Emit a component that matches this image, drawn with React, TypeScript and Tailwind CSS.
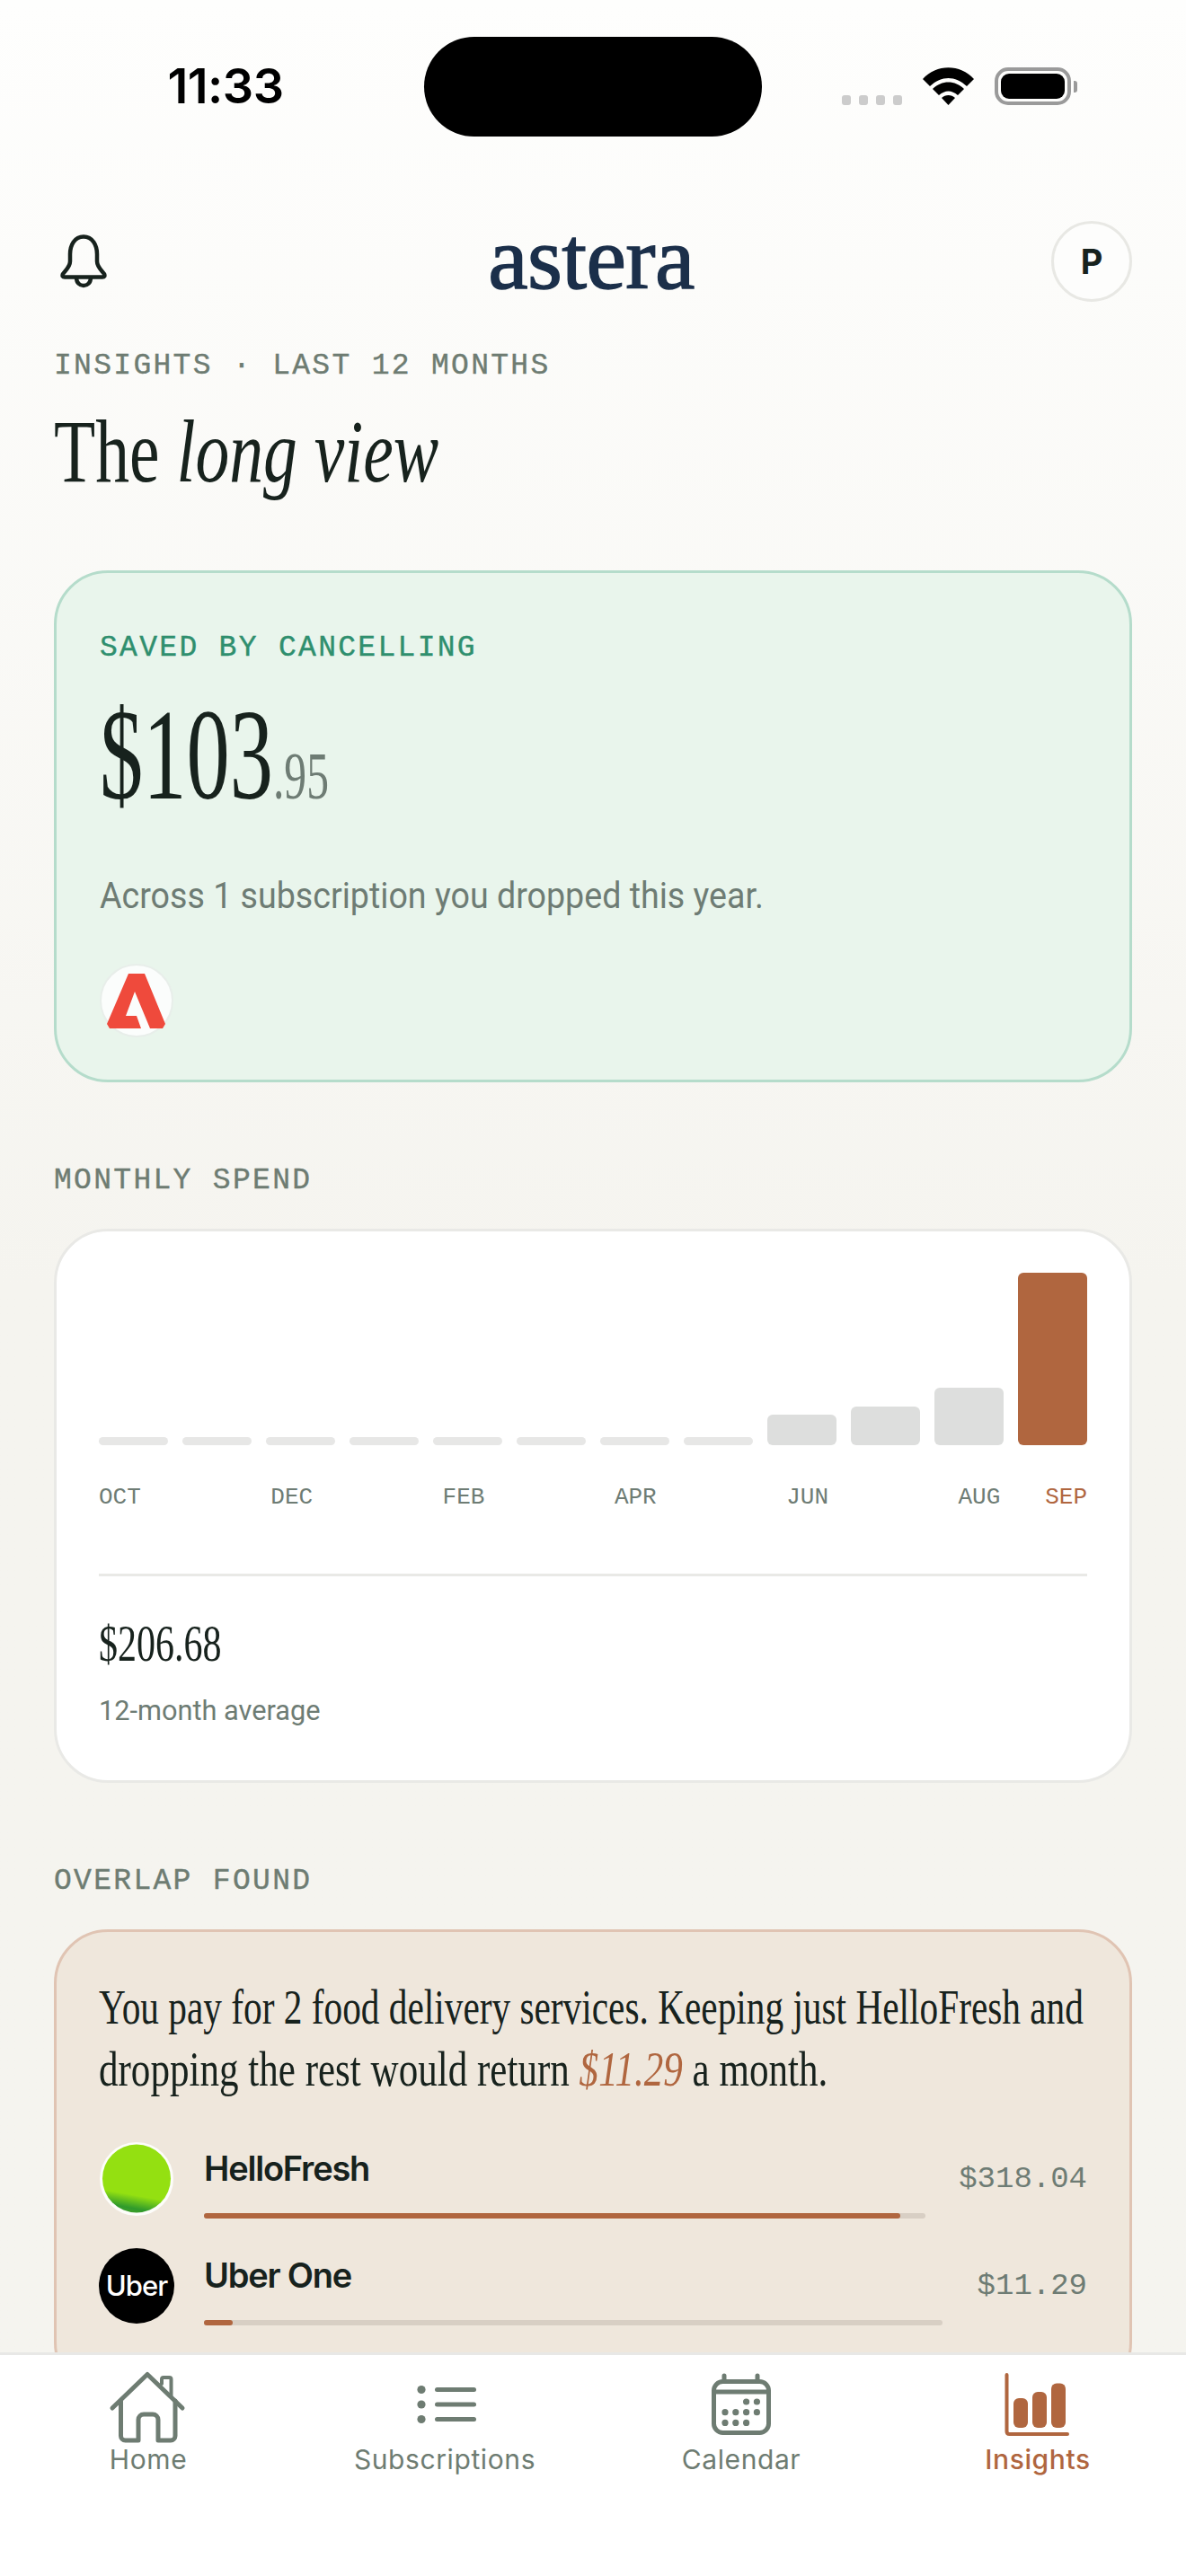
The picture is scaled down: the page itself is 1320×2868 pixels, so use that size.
const bars = [9, 9, 9, 9, 9, 9, 9, 9, 34, 43, 64, 192]
const monthLabels = ['OCT', 'DEC', 'FEB', 'APR', 'JUN']

const serif = "font-['Liberation_Serif',serif]"
const mono = "font-['Liberation_Mono',monospace]"

function StatusBar() {
  return (
    <div className="grid grid-cols-[472px_376px_1fr] pt-[41px] mb-[94px] shrink-0">
      <div className="flex items-center justify-center pl-[30px] pb-[1px]">
        <span className="font-['Inter',sans-serif] font-semibold text-[54px] leading-none tracking-[-0.5px] text-black">11:33</span>
      </div>
      <div className="h-[111px] rounded-[56px] bg-black" />
      <div className="flex items-start pl-[89px] pt-[34px]">
        <div className="flex gap-[9px] mt-[31px]">
          {[0, 1, 2, 3].map((i) => (
            <span key={i} className="w-[10px] h-[11px] rounded-[3px] bg-[#cccccc]" />
          ))}
        </div>
        <svg className="ml-[23px]" width="57" height="42" viewBox="0 0 57 42" fill="#000">
          <path d="M0 13C15-4 42-4 57 13L49 21C36 9 21 9 8 21Z" />
          <path d="M11 24C21 14 36 14 46 24L39 31C32 25 25 25 18 31Z" />
          <path d="M21 34C25 30 32 30 36 34L28.5 42Z" />
        </svg>
        <div className="ml-[23px] w-[85px] h-[42px] rounded-[15px] border-[4px] border-[#9a9a9a] p-[3px]">
          <div className="w-full h-full rounded-[9px] bg-black" />
        </div>
        <div className="ml-[3px] mt-[15px] w-[4px] h-[13px] rounded-r-[3px] bg-[#9a9a9a]" />
      </div>
    </div>
  )
}

function Header() {
  return (
    <div className="flex items-center justify-between h-[90px] pl-[7px]">
      <svg width="52" height="60" viewBox="0 0 52 60" fill="none" stroke="#17221d" strokeWidth="4.5">
        <path d="M26 2.5C16 2.5 11 12 11 22V30C11 36 6 40 3 44Q1.5 47.5 5 47.5H47Q50.5 47.5 49 44C46 40 41 36 41 30V22C41 12 36 2.5 26 2.5Z" />
        <path d="M18 48C18 60 34 60 34 48" />
      </svg>
      <span className={`${serif} text-[100px] leading-none tracking-[-0.6px] [-webkit-text-stroke:1.4px_#1b2f4a] text-[#1b2f4a] ml-[27px] mt-[-6px]`}>astera</span>
      <div className="w-[90px] h-[90px] rounded-full border-[3px] border-[#e8e8e4] bg-[#fdfdfc] flex items-center justify-center font-['Inter',sans-serif] font-bold text-[38px] text-[#17221d]">
        P
      </div>
    </div>
  )
}

function Label({ text, className }: { text: string; className: string }) {
  return <div className={`${mono} text-[33px] leading-none tracking-[2.3px] [-webkit-text-stroke:0.4px] ${className}`}>{text}</div>
}

function SavedCard() {
  return (
    <div className="mt-[76px] h-[570px] rounded-[60px] border-[3px] border-[#b5dccb] bg-[#e9f5ec] pl-[48px] pt-[67px]">
      <Label text="SAVED BY CANCELLING" className="text-[#2f8f6e]" />
      <div className={`${serif} mt-[28px] origin-left scale-x-[0.67] whitespace-nowrap text-[144px] leading-[150px] text-[#17221d]`}>
        $103<span className="text-[74px] text-[#6e7c74]">.95</span>
      </div>
      <p className="mt-[34px] origin-left scale-x-[0.94] whitespace-nowrap font-['Roboto',sans-serif] text-[40px] leading-[50px] text-[#6e7c74]">
        Across 1 subscription you dropped this year.
      </p>
      <div className="mt-[50px] w-[82px] h-[82px] rounded-full border-[2px] border-[#e8eeea] bg-[#fbfdfc] flex items-center justify-center">
        <svg width="66" height="62" viewBox="0 0 66 62">
          <path d="M24 1H42L65 57L62 62H48L31 21L21 48H33L38 62H3L0 57Z" fill="#ef4a3c" />
        </svg>
      </div>
    </div>
  )
}

function SpendCard() {
  return (
    <div className="mt-[37px] h-[617px] rounded-[60px] border-[3px] border-[#e9e9e6] bg-white px-[47px] pt-[46px]">
      <div className="flex items-end gap-[15.6px] h-[192px]">
        {bars.map((h, i) => (
          <div
            key={i}
            className={`flex-1 rounded-[6px] ${i === 11 ? 'bg-[#b0663f]' : i > 7 ? 'bg-[#dddedd]' : 'bg-[#e7e7e6]'}`}
            style={{ height: h }}
          />
        ))}
      </div>
      <div className={`${mono} flex mt-[46px] text-[26px] leading-[24px] text-[#6e7c74]`}>
        {monthLabels.map((m) => (
          <span key={m} className="w-[191.3px] shrink-0">{m}</span>
        ))}
        <span>AUG</span>
        <span className="ml-auto text-[#b0663f]">SEP</span>
      </div>
      <div className="mt-[73px] h-[3px] bg-[#e9e9e6]" />
      <div className={`${serif} mt-[43px] origin-left scale-x-[0.75] whitespace-nowrap text-[56px] leading-[64px] text-[#17221d]`}>$206.68</div>
      <div className="mt-[22px] origin-left scale-x-[0.96] whitespace-nowrap font-['Roboto',sans-serif] text-[32px] leading-[40px] text-[#6e7c74]">12-month average</div>
    </div>
  )
}

function UsageRow({ name, price, track, fill, logo }: { name: string; price: string; track: string; fill: number; logo: React.ReactNode }) {
  return (
    <div className="flex items-center h-[84px]">
      <div className="w-[84px] h-[84px] shrink-0 mr-[33px]">{logo}</div>
      <div className="self-stretch" style={{ width: track }}>
        <div className="mt-[5px] font-['Inter',sans-serif] font-semibold text-[38px] leading-[50px] tracking-[-1.2px] text-[#17221d]">{name}</div>
        <div className="mt-[25px] h-[6px] rounded-full bg-[#d8cfc4]">
          <div className="h-full rounded-full bg-[#b0663f]" style={{ width: `${fill}%` }} />
        </div>
      </div>
      <span className={`${mono} ml-auto text-[34px] leading-none text-[#6e7c74]`}>{price}</span>
    </div>
  )
}

function OverlapCard() {
  return (
    <div className="mt-[37px] h-[520px] rounded-[60px] border-[3px] border-[#e0c4b3] bg-[#efe7dc] px-[47px] pt-[49px]">
      <div className={`${serif} text-[55px] leading-[69px] text-[#17221d] whitespace-nowrap`}>
        <div className="origin-left scale-x-[0.751]">You pay for 2 food delivery services. Keeping just HelloFresh and</div>
        <div className="origin-left scale-x-[0.783]">dropping the rest would return <em className="text-[#b0663f]">$11.29</em> a month.</div>
      </div>
      <div className="mt-[46px] flex flex-col gap-[35px]">
        <UsageRow
          name="HelloFresh"
          price="$318.04"
          track="803px"
          fill={96.5}
          logo={
            <svg width="84" height="84" viewBox="0 0 84 84">
              <defs>
                <linearGradient id="hf" x1="0.58" y1="0" x2="0.4" y2="1">
                  <stop offset="0.74" stopColor="#94e011" />
                  <stop offset="0.93" stopColor="#2f9a2c" />
                  <stop offset="1" stopColor="#3f9f2a" />
                </linearGradient>
              </defs>
              <circle cx="42" cy="42" r="41" fill="#fdfdfa" />
              <circle cx="42" cy="41.5" r="38" fill="url(#hf)" />
            </svg>
          }
        />
        <UsageRow
          name="Uber One"
          price="$11.29"
          track="822px"
          fill={3.9}
          logo={
            <div className="w-[84px] h-[84px] rounded-full bg-black flex items-center justify-center font-['Inter',sans-serif] font-medium text-[31px] tracking-[-1px] text-white">
              Uber
            </div>
          }
        />
      </div>
    </div>
  )
}

function HomeIcon() {
  return (
    <svg width="92" height="84" viewBox="0 0 92 84" fill="none" stroke="#6e7c72" strokeWidth="5" strokeLinecap="round" strokeLinejoin="round">
      <path d="M6 41L45 3.5L84 41" />
      <path d="M15.5 33V72A5 5 0 0 0 20.5 77H35V54A6 6 0 0 1 41 48H51A6 6 0 0 1 57 54V77H71A5 5 0 0 0 76 72V33" />
      <path d="M61 14V9A2 2 0 0 1 63 7H69.5A2 2 0 0 1 71.5 9V27" strokeWidth="4" />
    </svg>
  )
}

function ListIcon() {
  return (
    <svg width="92" height="84" viewBox="0 0 92 84" fill="#6e7c72" stroke="none">
      <circle cx="20" cy="20.5" r="4.6" />
      <circle cx="20" cy="37" r="4.6" />
      <circle cx="20" cy="53.5" r="4.6" />
      <rect x="35" y="18" width="46" height="5" rx="2.5" />
      <rect x="35" y="34.5" width="46" height="5" rx="2.5" />
      <rect x="35" y="51" width="46" height="5" rx="2.5" />
    </svg>
  )
}

function CalendarIcon() {
  const dots: [number, number][] = [
    [2, 0], [3, 0],
    [0, 1], [1, 1], [2, 1], [3, 1],
    [0, 2], [1, 2], [2, 2],
  ]
  return (
    <svg width="92" height="84" viewBox="0 0 92 84" fill="none" stroke="#6e7c72" strokeWidth="5">
      <rect x="15.5" y="11.5" width="61" height="57" rx="10" />
      <path d="M14 23H78" />
      <path d="M27 5V11M64 5V11" strokeLinecap="round" />
      {dots.map(([c, r]) => (
        <circle key={`${c}-${r}`} cx={28 + c * 11.8} cy={34 + r * 11.7} r="3.6" fill="#6e7c72" stroke="none" />
      ))}
    </svg>
  )
}

function InsightsIcon() {
  return (
    <svg width="92" height="84" viewBox="0 0 92 84" fill="#b0663f">
      <path d="M11.5 4V67Q11.5 70 14.5 70H79" fill="none" stroke="#b0663f" strokeWidth="4" strokeLinecap="round" />
      <rect x="19" y="30" width="16" height="33" rx="6" />
      <rect x="40" y="23" width="16" height="40" rx="6" />
      <rect x="61" y="13.5" width="16" height="49.5" rx="6" />
    </svg>
  )
}

const tabs = [
  { label: 'Home', icon: <HomeIcon /> },
  { label: 'Subscriptions', icon: <ListIcon /> },
  { label: 'Calendar', icon: <CalendarIcon /> },
  { label: 'Insights', icon: <InsightsIcon />, active: true },
]

function TabBar() {
  return (
    <div className="h-[249px] shrink-0 border-t-[3px] border-[#e8e8e6] bg-white grid grid-cols-4 pt-[18px]">
      {tabs.map((t) => (
        <div key={t.label} className="flex flex-col items-center">
          <div className="h-[80px]">{t.icon}</div>
          <span className={`font-['Inter',sans-serif] text-[30px] leading-[36px] tracking-[0.6px] ${t.active ? 'text-[#b0663f] font-medium' : 'text-[#6e7c72]'}`}>
            {t.label}
          </span>
        </div>
      ))}
    </div>
  )
}

export default function App() {
  return (
    <div className="w-[1320px] h-[2868px] flex flex-col overflow-hidden bg-gradient-to-b from-[#fefefd] to-[#f5f4ef] to-[50%]">
      <div className="flex-1 min-h-0 overflow-hidden">
        <StatusBar />
        <div className="px-[60px]">
          <Header />
          <Label text="INSIGHTS · LAST 12 MONTHS" className="mt-[55px] text-[#6e7c72]" />
          <h1 className={`${serif} mt-[23px] origin-left scale-x-[0.756] whitespace-nowrap text-[100px] leading-[112px] font-normal text-[#17221d]`}>
            The <em>long view</em>
          </h1>
          <SavedCard />
          <Label text="MONTHLY SPEND" className="mt-[93px] text-[#6e7c72]" />
          <SpendCard />
          <Label text="OVERLAP FOUND" className="mt-[93px] text-[#6e7c72]" />
          <OverlapCard />
        </div>
      </div>
      <TabBar />
    </div>
  )
}
